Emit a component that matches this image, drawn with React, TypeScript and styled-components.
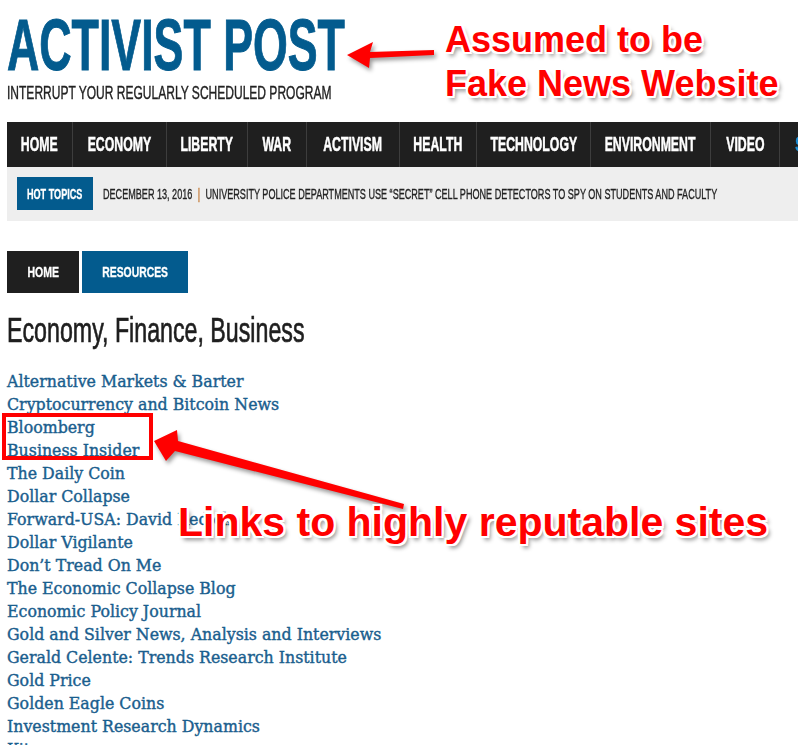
import React from "react";
import styled, { createGlobalStyle } from "styled-components";

const navItems = [
  { label: "HOME", w: 66 },
  { label: "ECONOMY", w: 94 },
  { label: "LIBERTY", w: 81 },
  { label: "WAR", w: 59 },
  { label: "ACTIVISM", w: 93 },
  { label: "HEALTH", w: 77 },
  { label: "TECHNOLOGY", w: 114 },
  { label: "ENVIRONMENT", w: 120 },
  { label: "VIDEO", w: 69 },
  { label: "SHOP", w: 66, blue: true },
];

const links = [
  "Alternative Markets & Barter",
  "Cryptocurrency and Bitcoin News",
  "Bloomberg",
  "Business Insider",
  "The Daily Coin",
  "Dollar Collapse",
  "Forward-USA: David Redick",
  "Dollar Vigilante",
  "Don\u2019t Tread On Me",
  "The Economic Collapse Blog",
  "Economic Policy Journal",
  "Gold and Silver News, Analysis and Interviews",
  "Gerald Celente: Trends Research Institute",
  "Gold Price",
  "Golden Eagle Coins",
  "Investment Research Dynamics",
  "Kitco",
];

const App = () => {
  return (
    <>
      <GlobalStyle />
      <Page>
        <Masthead>
          <Logo>
            <Squeeze $x={0.616}>ACTIVIST POST</Squeeze>
          </Logo>
          <Tagline>
            <Squeeze $x={0.668}>INTERRUPT YOUR REGULARLY SCHEDULED PROGRAM</Squeeze>
          </Tagline>
        </Masthead>

        <NavBar>
          {navItems.map((item) => (
            <NavItem key={item.label} $w={item.w} $blue={item.blue}>
              <Squeeze $x={0.63} $origin="center">{item.label}</Squeeze>
            </NavItem>
          ))}
        </NavBar>

        <HotBar>
          <HotBadge>
            <Squeeze $x={0.65} $origin="center">HOT TOPICS</Squeeze>
          </HotBadge>
          <Ticker>
            <Squeeze $x={0.605}>
              DECEMBER 13, 2016<TickerBar>|</TickerBar>UNIVERSITY POLICE DEPARTMENTS USE
              {" \u201CSECRET\u201D "}CELL PHONE DETECTORS TO SPY ON STUDENTS AND FACULTY
            </Squeeze>
          </Ticker>
        </HotBar>

        <Crumbs>
          <Crumb $w={72} $bg="#1f1f1f">
            <Squeeze $x={0.68} $origin="center">HOME</Squeeze>
          </Crumb>
          <Crumb $w={106} $bg="#035b8e">
            <Squeeze $x={0.67} $origin="center">RESOURCES</Squeeze>
          </Crumb>
        </Crumbs>

        <SectionTitle>
          <Squeeze $x={0.663}>Economy, Finance, Business</Squeeze>
        </SectionTitle>

        <LinkList>
          {links.map((name) => (
            <LinkRow key={name}>
              <ResourceLink href="#">{name}</ResourceLink>
            </LinkRow>
          ))}
        </LinkList>

        <Overlay width="798" height="745" viewBox="0 0 798 745">
          <polygon points="347,55 373,42 370,52 434,50 434,55 370,58 369,68" />
          <polygon points="154,441 177,430 178,441 404,504 403,509 175,451 166,461" />
        </Overlay>

        <HighlightBox />

        <Callout $top={17.8} $left={445} $size={36} $lh={44}>
          Assumed to be
          <br />
          Fake News Website
        </Callout>
        <Callout $top={502} $left={178} $size={41} $lh={41}>
          Links to highly reputable sites
        </Callout>
      </Page>
    </>
  );
};

const GlobalStyle = createGlobalStyle`
  html, body {
    margin: 0;
    padding: 0;
    background: #fff;
  }
  body {
    font-family: "Liberation Sans", Arial, sans-serif;
  }
`;

const Page = styled.div`
  position: relative;
  width: 798px;
  height: 745px;
  overflow: hidden;
  padding-left: 7px;
  box-sizing: border-box;
`;

const Squeeze = styled.span<{ $x: number; $origin?: string }>`
  display: inline-block;
  white-space: nowrap;
  transform: scaleX(${(p) => p.$x});
  transform-origin: ${(p) => p.$origin ?? "left center"};
`;

const Masthead = styled.header`
  padding-top: 8.5px;
`;

const Logo = styled.h1`
  margin: 0;
  font-family: "Liberation Sans", Arial, sans-serif;
  font-size: 72.6px;
  font-weight: 700;
  line-height: 72px;
  color: #035b8e;
  -webkit-text-stroke: 1px #035b8e;
`;

const Tagline = styled.div`
  margin-top: 3.3px;
  font-size: 18px;
  line-height: 18px;
  color: #222;
  -webkit-text-stroke: 0.4px #222;
`;

const NavBar = styled.nav`
  display: flex;
  height: 45px;
  margin-top: 20px;
  background: #1f1f1f;
  overflow: hidden;
`;

const NavItem = styled.a<{ $w: number; $blue?: boolean }>`
  flex: none;
  width: ${(p) => p.$w}px;
  box-sizing: border-box;
  display: flex;
  align-items: center;
  justify-content: center;
  border-right: 1px solid #3d3d3d;
  color: ${(p) => (p.$blue ? "#1a8fd8" : "#fff")};
  font-size: 19.5px;
  font-weight: 700;
  line-height: 45px;
  text-decoration: none;
  -webkit-text-stroke: 0.5px currentColor;
`;

const HotBar = styled.div`
  display: flex;
  align-items: center;
  gap: 10px;
  height: 54px;
  padding-left: 10px;
  background: #eeeeee;
  overflow: hidden;
`;

const HotBadge = styled.div`
  flex: none;
  width: 76px;
  height: 33px;
  display: flex;
  align-items: center;
  justify-content: center;
  background: #035b8e;
  color: #fff;
  font-size: 14px;
  font-weight: 700;
  -webkit-text-stroke: 0.3px #fff;
`;

const Ticker = styled.div`
  flex: none;
  font-size: 15px;
  color: #222;
  white-space: nowrap;
  -webkit-text-stroke: 0.35px #222;
`;

const TickerBar = styled.span`
  margin: 0 9px;
  color: #c0722a;
  -webkit-text-stroke: 0.35px #c0722a;
`;

const Crumbs = styled.div`
  display: flex;
  gap: 3px;
  margin-top: 30px;
`;

const Crumb = styled.a<{ $w: number; $bg: string }>`
  width: ${(p) => p.$w}px;
  height: 42px;
  display: flex;
  align-items: center;
  justify-content: center;
  background: ${(p) => p.$bg};
  color: #fff;
  font-size: 15.5px;
  font-weight: 700;
  text-decoration: none;
  -webkit-text-stroke: 0.3px #fff;
`;

const SectionTitle = styled.h2`
  margin: 19.4px 0 0;
  font-size: 35px;
  font-weight: 400;
  line-height: 35px;
  color: #1e1e1e;
  -webkit-text-stroke: 0.7px #1e1e1e;
`;

const LinkList = styled.ul`
  margin: 22.6px 0 0;
  padding: 0;
  list-style: none;
`;

const LinkRow = styled.li`
  font-family: "DejaVu Serif", "Liberation Serif", serif;
  font-size: 15.8px;
  line-height: 23px;
`;

const ResourceLink = styled.a`
  color: #1a5e8e;
  text-decoration: none;
  -webkit-text-stroke: 0.4px #1a5e8e;
`;

const Overlay = styled.svg`
  position: absolute;
  left: 0;
  top: 0;
  pointer-events: none;
  fill: #ff0000;
  filter: drop-shadow(2px 3px 2px rgba(0, 0, 0, 0.4));
`;

const HighlightBox = styled.div`
  position: absolute;
  left: 2px;
  top: 413px;
  width: 151px;
  height: 47px;
  box-sizing: border-box;
  border: 4px solid #ff0000;
`;

const Callout = styled.div<{ $top: number; $left: number; $size: number; $lh: number }>`
  position: absolute;
  top: ${(p) => p.$top}px;
  left: ${(p) => p.$left}px;
  font-family: "Liberation Sans", Arial, sans-serif;
  font-size: ${(p) => p.$size}px;
  line-height: ${(p) => p.$lh}px;
  font-weight: 700;
  color: #ff0000;
  white-space: nowrap;
  text-shadow: -2px -2px 0 #fff, 2px -2px 0 #fff, -2px 2px 0 #fff, 2px 2px 0 #fff,
    0 -2px 0 #fff, 0 2px 0 #fff, -2px 0 0 #fff, 2px 0 0 #fff,
    3px 4px 4px rgba(0, 0, 0, 0.45);
`;

export default App;
